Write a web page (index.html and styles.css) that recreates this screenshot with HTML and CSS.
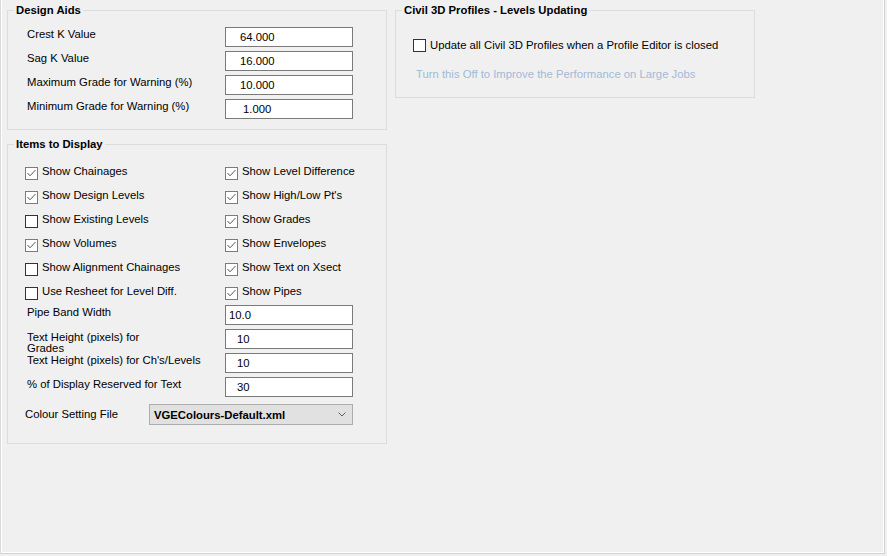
FILE: index.html
```html
<!DOCTYPE html>
<html lang="en">
<head>
  <meta charset="UTF-8" />
  <title>Profile Settings</title>
  <link rel="stylesheet" href="styles.css">
</head>
<body>
  <div class="frame">

    <div class="column">
      <!-- Design Aids -->
      <fieldset class="group">
        <legend>Design Aids</legend>
        <div class="design-grid">
          <span class="lbl">Crest K Value</span>
          <input class="num" type="text" value="64.000">
          <span class="lbl">Sag K Value</span>
          <input class="num" type="text" value="16.000">
          <span class="lbl">Maximum Grade for Warning (%)</span>
          <input class="num" type="text" value="10.000">
          <span class="lbl">Minimum Grade for Warning (%)</span>
          <input class="num num-short" type="text" value="1.000">
        </div>
      </fieldset>

      <!-- Items to Display -->
      <fieldset class="group items">
        <legend>Items to Display</legend>
        <div class="items-inner">
          <div class="check-grid">
            <label class="chk"><span class="cb on"><svg width="11" height="11" viewBox="0 0 11 11"><polyline points="1.5,5 4,7.8 9.5,2" /></svg></span>Show Chainages</label>
            <label class="chk"><span class="cb on"><svg width="11" height="11" viewBox="0 0 11 11"><polyline points="1.5,5 4,7.8 9.5,2" /></svg></span>Show Level Difference</label>
            <label class="chk"><span class="cb on"><svg width="11" height="11" viewBox="0 0 11 11"><polyline points="1.5,5 4,7.8 9.5,2" /></svg></span>Show Design Levels</label>
            <label class="chk"><span class="cb on"><svg width="11" height="11" viewBox="0 0 11 11"><polyline points="1.5,5 4,7.8 9.5,2" /></svg></span>Show High/Low Pt's</label>
            <label class="chk"><span class="cb"></span>Show Existing Levels</label>
            <label class="chk"><span class="cb on"><svg width="11" height="11" viewBox="0 0 11 11"><polyline points="1.5,5 4,7.8 9.5,2" /></svg></span>Show Grades</label>
            <label class="chk"><span class="cb on"><svg width="11" height="11" viewBox="0 0 11 11"><polyline points="1.5,5 4,7.8 9.5,2" /></svg></span>Show Volumes</label>
            <label class="chk"><span class="cb on"><svg width="11" height="11" viewBox="0 0 11 11"><polyline points="1.5,5 4,7.8 9.5,2" /></svg></span>Show Envelopes</label>
            <label class="chk"><span class="cb"></span>Show Alignment Chainages</label>
            <label class="chk"><span class="cb on"><svg width="11" height="11" viewBox="0 0 11 11"><polyline points="1.5,5 4,7.8 9.5,2" /></svg></span>Show Text on Xsect</label>
            <label class="chk"><span class="cb"></span>Use Resheet for Level Diff.</label>
            <label class="chk"><span class="cb on"><svg width="11" height="11" viewBox="0 0 11 11"><polyline points="1.5,5 4,7.8 9.5,2" /></svg></span>Show Pipes</label>
          </div>

          <div class="field-grid">
            <span class="lbl">Pipe Band Width</span>
            <input class="num num-tight" type="text" value="10.0">
            <span class="lbl lbl-wrap">Text Height (pixels) for<br>Grades</span>
            <input class="num num-mid" type="text" value="10">
            <span class="lbl">Text Height (pixels) for Ch's/Levels</span>
            <input class="num num-mid" type="text" value="10">
            <span class="lbl">% of Display Reserved for Text</span>
            <input class="num num-mid" type="text" value="30">
          </div>

          <div class="colour-row">
            <span class="colour-lbl">Colour Setting File</span>
            <div class="dropdown">
              <span>VGEColours-Default.xml</span>
              <svg width="8" height="5" viewBox="0 0 8 5"><polyline points="0.5,0.5 4,4 7.5,0.5" /></svg>
            </div>
          </div>
        </div>
      </fieldset>
    </div>

    <!-- Civil 3D Profiles -->
    <fieldset class="group civil">
      <legend>Civil 3D Profiles - Levels Updating</legend>
      <div class="civil-inner">
        <label class="chk chk-civil"><span class="cb"></span>Update all Civil 3D Profiles when a Profile Editor is closed</label>
        <div class="hint">Turn this Off to Improve the Performance on Large Jobs</div>
      </div>
    </fieldset>

  </div>
</body>
</html>
```

FILE: styles.css
```css
body {
  margin: 0;
  background: #f0f0f0;
  font-family: "Liberation Sans", Arial, sans-serif;
  font-size: 11.3px;
  color: #000;
  width: 887px;
  height: 556px;
  overflow: hidden;
}
/* Outer panel with the sunken edge */
.frame {
  box-sizing: border-box;
  width: 885px;
  height: 554px;
  display: flex;
  align-items: flex-start;
  padding: 4px 0 0 6px;
  border-left: 1px solid #dadada;
  border-right: 1px solid #d2d2d2;
  border-bottom: 1px solid #d2d2d2;
  box-shadow: inset 1px 0 #fff, inset -1px -1px #fff;
}
.column {
  display: flex;
  flex-direction: column;
}
/* Group boxes */
.group {
  margin: 0;
  padding: 0;
  min-width: 0;
  border: 1px solid #dcdcdc;
}
.group legend {
  margin-left: 6px;
  padding: 0 2px;
  font-weight: bold;
  line-height: 13px;
}
.group:first-child {
  width: 380px;
  box-sizing: border-box;
}
.items {
  width: 380px;
  box-sizing: border-box;
  margin-top: 8px;
}
.civil {
  width: 360px;
  box-sizing: border-box;
  margin-left: 8px;
}
.lbl {
  line-height: 13px;
  white-space: nowrap;
}
/* Text boxes */
.num {
  box-sizing: border-box;
  width: 128px;
  height: 20px;
  margin: 0;
  padding: 0 0 0 14px;
  border: 1px solid #7a7a7a;
  background: #fff;
  font-family: "Liberation Sans", Arial, sans-serif;
  font-size: 11.3px;
  color: #000;
  outline: none;
}
.num-short { padding-left: 17px; }
.num-tight { padding-left: 3px; }
.num-mid { padding-left: 11px; }
/* Design aids rows */
.design-grid {
  display: grid;
  grid-template-columns: 198px 128px;
  grid-auto-rows: 20px;
  row-gap: 4px;
  padding: 10px 0 10px 19px;
}
.design-grid .lbl { padding-top: 1px; }
/* Items to display */
.items-inner {
  padding: 10px 0 18px 17px;
}
.check-grid {
  display: grid;
  grid-template-columns: 200px 150px;
  grid-auto-rows: 24px;
}
.chk {
  display: flex;
  align-items: flex-start;
  line-height: 13px;
  white-space: nowrap;
}
.check-grid .chk { padding-top: 4px; }
.check-grid .chk .cb { margin-top: 2px; }
.cb {
  box-sizing: border-box;
  flex: none;
  width: 13px;
  height: 13px;
  margin-right: 4px;
  border: 1px solid #333;
  background: #fff;
  display: flex;
  align-items: center;
  justify-content: center;
}
.cb.on {
  border-color: #7c7c7c;
}
.cb svg polyline {
  fill: none;
  stroke: #5a5a5a;
  stroke-width: 1;
}
.field-grid {
  display: grid;
  grid-template-columns: 198px 128px;
  grid-auto-rows: 20px;
  row-gap: 4px;
  padding-left: 2px;
}
.field-grid .lbl { padding-top: 1px; }
.field-grid .lbl-wrap {
  line-height: 11px;
  padding-top: 3px;
}
.colour-row {
  display: flex;
  align-items: center;
  margin-top: 7px;
}
.colour-lbl {
  width: 124px;
  line-height: 13px;
}
/* Combo box */
.dropdown {
  box-sizing: border-box;
  width: 204px;
  height: 21px;
  padding: 0 6px 0 4px;
  border: 1px solid #adadad;
  background: #e1e1e1;
  display: flex;
  align-items: center;
  justify-content: space-between;
  font-weight: bold;
}
.dropdown svg polyline {
  fill: none;
  stroke: #606060;
  stroke-width: 1;
}
/* Civil 3D */
.civil-inner {
  padding: 22px 0 16px 17px;
}
.hint {
  margin-top: 16px;
  padding-left: 3px;
  line-height: 13px;
  color: #a3b9d6;
}
```
